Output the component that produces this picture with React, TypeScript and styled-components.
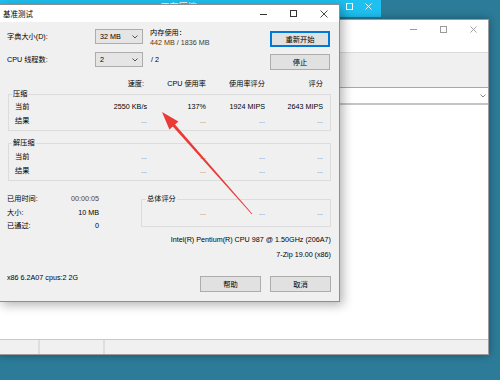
import React from "react";
import styled, { createGlobalStyle } from "styled-components";

const Global = createGlobalStyle`
  html, body { margin: 0; padding: 0; }
  body {
    width: 500px; height: 380px; overflow: hidden;
    font-family: "Liberation Sans", "Noto Sans CJK SC", sans-serif;
  }
  * { box-sizing: border-box; }
`;

const Desktop = styled.div`
  position: relative;
  width: 500px;
  height: 380px;
  overflow: hidden;
  background: #2c7b98;
`;

/* ---------- cyan background window strip ---------- */
const BackStrip = styled.div`
  position: absolute;
  left: 0;
  top: 0;
  width: 381px;
  height: 17px;
  background: #1ec0f0;
  display: flex;
  align-items: center;
  padding: 0 9px 4px 140px;
`;
const StripTitle = styled.span`
  color: #fff;
  font-size: 9px;
  white-space: nowrap;
`;
const StripControls = styled.div`
  margin-left: auto;
  display: flex;
  gap: 12px;
  align-items: center;
`;

/* ---------- explorer window behind ---------- */
const Explorer = styled.div`
  position: absolute;
  left: -2px;
  top: 19px;
  width: 491px;
  height: 336px;
  background: #fff;
  border: 1px solid #9c9c9c;
  box-shadow: 0 0 8px rgba(0, 0, 0, 0.35);
  display: flex;
  flex-direction: column;
`;
const ExTitle = styled.div`
  height: 32px;
  display: flex;
  justify-content: flex-end;
  align-items: flex-start;
  padding: 5px 11px 0 0;
`;
const ExToolbar = styled.div`
  height: 35px;
  background: #f0f0f0;
  border-top: 1px solid #dadada;
`;
const ExAddress = styled.div`
  height: 18px;
  background: #fff;
  border-top: 1px solid #a8a8a8;
  border-bottom: 2px solid #c4c4c4;
  display: flex;
  justify-content: flex-end;
  align-items: center;
  padding-right: 2px;
`;
const ExContent = styled.div`
  flex: 1;
  background: #fff;
`;
const ExStatus = styled.div`
  height: 15px;
  background: #f0f0f0;
  border-top: 1px solid #c8c8c8;
  display: flex;
`;
const StatusCell = styled.div<{ $w: number }>`
  width: ${(p) => p.$w}px;
  border-right: 2px solid #dedede;
`;

const CtrlGroup = styled.div<{ $gap: number }>`
  display: flex;
  align-items: center;
  gap: ${(p) => p.$gap}px;
`;

/* ---------- benchmark dialog ---------- */
const Dialog = styled.div`
  position: absolute;
  left: -1px;
  top: 4px;
  width: 341px;
  height: 298px;
  background: #f0f0f0;
  border: 1px solid #8e8e8e;
  box-shadow: 3px 3px 10px rgba(0, 0, 0, 0.3);
  display: flex;
  flex-direction: column;
`;
const TitleBar = styled.div`
  height: 17px;
  background: #fff;
  display: flex;
  align-items: center;
  padding: 0 11px 0 3px;
`;
const TitleText = styled.span`
  font-size: 7.5px;
  color: #000;
`;
const TitleControls = styled.div`
  margin-left: auto;
  display: flex;
  align-items: center;
  gap: 23px;
`;

const Body = styled.div`
  flex: 1;
  padding: 6px 8px 0 7px;
  display: flex;
  flex-direction: column;
  font-size: 7.2px;
  color: #000;
`;

const TopGrid = styled.div`
  display: grid;
  grid-template-columns: 88px 48px 127px 60px;
  grid-template-rows: 23px 23px;
`;
const FieldLabel = styled.div`
  line-height: 15px;
  margin-top: 1px;
  white-space: nowrap;
`;
const Combo = styled.div`
  height: 15px;
  margin-top: 1px;
  background: #e5e5e5;
  border: 1px solid #adadad;
  display: flex;
  align-items: center;
  justify-content: space-between;
  padding: 0 4px 0 4px;
  white-space: nowrap;
`;
const MemInfo = styled.div`
  padding-left: 7px;
  line-height: 10px;
  white-space: nowrap;
`;
const MemValue = styled.div`
  color: #4a3b28;
`;
const ThreadsInfo = styled.div`
  padding-left: 8px;
  line-height: 15px;
  margin-top: 1px;
`;
const Btn = styled.button<{ $primary?: boolean; $top?: number }>`
  width: ${(p) => (p.$primary !== undefined ? 60 : 61)}px;
  height: 16px;
  margin: ${(p) => p.$top ?? 3}px 0 0 0;
  padding: 0;
  background: #e1e1e1;
  border: 1px solid ${(p) => (p.$primary ? "#0078d7" : "#adadad")};
  box-shadow: ${(p) => (p.$primary ? "inset 0 0 0 1px #0078d7" : "none")};
  font-family: inherit;
  font-size: 7.3px;
  color: #000;
  display: flex;
  align-items: center;
  justify-content: center;
`;

const StatGrid = styled.div<{ $pt?: number; $pb?: number }>`
  display: grid;
  grid-template-columns: 72px 60px 59px 59px 58px;
  padding: ${(p) => p.$pt ?? 0}px 7px ${(p) => p.$pb ?? 0}px 6px;
  line-height: 14px;
`;
const HeaderGrid = styled(StatGrid)`
  margin: 5px 0 0 1px;
  padding: 0 8px 0 7px;
  line-height: 10px;
`;
const Cell = styled.div<{ $pr?: number; $tone?: "dots" | "violet" }>`
  text-align: right;
  white-space: nowrap;
  padding-right: ${(p) => p.$pr ?? 0}px;
  color: ${(p) =>
    p.$tone === "dots" ? "#6f6f6f" : p.$tone === "violet" ? "#7a5f9c" : "inherit"};
`;
const RowLabel = styled.div`
  white-space: nowrap;
`;

const Group = styled.fieldset<{ $mt?: number; $w?: number }>`
  margin: ${(p) => p.$mt ?? 0}px 0 0 1px;
  padding: 0;
  border: 1px solid #dcdcdc;
  min-width: 0;
  width: ${(p) => p.$w ?? 323}px;
`;
const GroupLegend = styled.legend<{ $ml?: number }>`
  margin-left: ${(p) => p.$ml ?? 3}px;
  padding: 0 1px;
  line-height: 10px;
  font-size: 7.2px;
`;

const BottomSection = styled.div`
  display: flex;
  align-items: flex-start;
  margin-top: 11px;
`;
const InfoList = styled.div`
  width: 92px;
  display: grid;
  grid-template-columns: 1fr auto;
  line-height: 13.5px;
`;
const InfoValue = styled.div<{ $warm?: boolean }>`
  text-align: right;
  color: ${(p) => (p.$warm ? "#5a3f1e" : "inherit")};
`;
const TotalGroup = styled(Group)`
  margin: 2px 0 0 42px;
`;
const TotalGrid = styled.div`
  display: grid;
  grid-template-columns: 64px 59px 58px;
  padding: 2px 7px 6px 0;
  line-height: 14px;
`;

const RightLine = styled.div<{ $mt?: number }>`
  text-align: right;
  line-height: 15px;
  margin-top: ${(p) => p.$mt ?? 0}px;
  white-space: nowrap;
`;

const Footer = styled.div`
  display: flex;
  align-items: flex-start;
`;
const FooterText = styled.div`
  margin-top: 10px;
  line-height: 12px;
  white-space: nowrap;
`;
const FooterButtons = styled.div`
  margin-left: auto;
  display: flex;
  gap: 9px;
`;

const ArrowLayer = styled.svg`
  position: absolute;
  left: 0;
  top: 0;
  pointer-events: none;
`;

/* ---------- icons ---------- */
const MinIcon = ({ c, w = 7 }: { c: string; w?: number }) => (
  <svg width={w} height={8} viewBox={`0 0 ${w} 8`}>
    <line x1={0} y1={4.5} x2={w} y2={4.5} stroke={c} strokeWidth={1} />
  </svg>
);
const MaxIcon = ({ c, s = 6 }: { c: string; s?: number }) => (
  <svg width={s + 1} height={s + 1} viewBox={`0 0 ${s + 1} ${s + 1}`}>
    <rect x={0.5} y={0.5} width={s} height={s} fill="none" stroke={c} strokeWidth={1} />
  </svg>
);
const CloseIcon = ({ c, s = 8 }: { c: string; s?: number }) => (
  <svg width={s} height={s} viewBox={`0 0 ${s} ${s}`}>
    <path d={`M0.5 0.5 L${s - 0.5} ${s - 0.5} M${s - 0.5} 0.5 L0.5 ${s - 0.5}`} stroke={c} strokeWidth={0.9} />
  </svg>
);
const Chevron = ({ c = "#444" }: { c?: string }) => (
  <svg width={6} height={4} viewBox="0 0 6 4">
    <polyline points="0.5,0.5 3,3 5.5,0.5" fill="none" stroke={c} strokeWidth={0.9} />
  </svg>
);

type Row = { label: string; v: [string, string, string, string] };

const StatRows = ({ rows }: { rows: Row[] }) => (
  <>
    {rows.map((r) => (
      <React.Fragment key={r.label}>
        <RowLabel>{r.label}</RowLabel>
        {r.v.map((val, i) => (
          <Cell
            key={i}
            $tone={val === "..." ? (i === 2 ? "violet" : "dots") : undefined}
          >
            {val}
          </Cell>
        ))}
      </React.Fragment>
    ))}
  </>
);

export default function App() {
  // arrow geometry
  const tip = [162, 112];
  const tail = [252, 214];
  const dx = tip[0] - tail[0];
  const dy = tip[1] - tail[1];
  const len = Math.hypot(dx, dy);
  const ux = dx / len;
  const uy = dy / len;
  const px = -uy;
  const py = ux;
  const hl = 18;
  const hw = 6;
  const bx = tip[0] - hl * ux;
  const by = tip[1] - hl * uy;
  const head = `${tip[0]},${tip[1]} ${bx + hw * px},${by + hw * py} ${bx - hw * px},${by - hw * py}`;
  const sb = 1.5;
  const st = 0.4;
  const shaft = `${bx + 2 * ux + sb * px},${by + 2 * uy + sb * py} ${tail[0] + st * px},${tail[1] + st * py} ${tail[0] - st * px},${tail[1] - st * py} ${bx + 2 * ux - sb * px},${by + 2 * uy - sb * py}`;

  return (
    <>
      <Global />
      <Desktop>
        <BackStrip>
          <StripTitle>27% 正在压缩</StripTitle>
          <StripControls>
            <MaxIcon c="#ffffff" s={6} />
            <CloseIcon c="#ffffff" s={7} />
          </StripControls>
        </BackStrip>

        <Explorer>
          <ExTitle>
            <CtrlGroup $gap={23}>
              <MinIcon c="#9a9a9a" w={7} />
              <MaxIcon c="#9a9a9a" s={6} />
              <CloseIcon c="#9a9a9a" s={7} />
            </CtrlGroup>
          </ExTitle>
          <ExToolbar />
          <ExAddress>
            <Chevron c="#777" />
          </ExAddress>
          <ExContent />
          <ExStatus>
            <StatusCell $w={41} />
            <StatusCell $w={65} />
          </ExStatus>
        </Explorer>

        <Dialog>
          <TitleBar>
            <TitleText>基准测试</TitleText>
            <TitleControls>
              <MinIcon c="#333" w={7} />
              <MaxIcon c="#333" s={6} />
              <CloseIcon c="#333" s={8} />
            </TitleControls>
          </TitleBar>
          <Body>
            <TopGrid>
              <FieldLabel>字典大小(D):</FieldLabel>
              <Combo>
                <span>32 MB</span>
                <Chevron />
              </Combo>
              <MemInfo>
                <div>内存使用：</div>
                <MemValue>442 MB / 1836 MB</MemValue>
              </MemInfo>
              <Btn $primary>重新开始</Btn>

              <FieldLabel>CPU 线程数:</FieldLabel>
              <Combo>
                <span>2</span>
                <Chevron />
              </Combo>
              <ThreadsInfo>/ 2</ThreadsInfo>
              <Btn $primary={false}>停止</Btn>
            </TopGrid>

            <HeaderGrid>
              <div />
              <Cell $pr={3}>速度:</Cell>
              <Cell>CPU 使用率</Cell>
              <Cell>使用率评分</Cell>
              <Cell>评分</Cell>
            </HeaderGrid>

            <Group>
              <GroupLegend>压缩</GroupLegend>
              <StatGrid $pt={1} $pb={2}>
                <StatRows
                  rows={[
                    { label: "当前", v: ["2550 KB/s", "137%", "1924 MIPS", "2643 MIPS"] },
                    { label: "结果", v: ["...", "...", "...", "..."] },
                  ]}
                />
              </StatGrid>
            </Group>

            <Group $mt={7}>
              <GroupLegend>解压缩</GroupLegend>
              <StatGrid $pt={2} $pb={2}>
                <StatRows
                  rows={[
                    { label: "当前", v: ["...", "...", "...", "..."] },
                    { label: "结果", v: ["...", "...", "...", "..."] },
                  ]}
                />
              </StatGrid>
            </Group>

            <BottomSection>
              <InfoList>
                <div>已用时间:</div>
                <InfoValue $warm>00:00:05</InfoValue>
                <div>大小:</div>
                <InfoValue>10 MB</InfoValue>
                <div>已通过:</div>
                <InfoValue>0</InfoValue>
              </InfoList>
              <TotalGroup $w={190}>
                <GroupLegend $ml={4}>总体评分</GroupLegend>
                <TotalGrid>
                  <Cell $tone="dots">...</Cell>
                  <Cell $tone="violet">...</Cell>
                  <Cell $tone="dots">...</Cell>
                </TotalGrid>
              </TotalGroup>
            </BottomSection>

            <RightLine $mt={-1}>Intel(R) Pentium(R) CPU 987 @ 1.50GHz (206A7)</RightLine>
            <RightLine>7-Zip 19.00 (x86)</RightLine>

            <Footer>
              <FooterText>x86 6.2A07 cpus:2 2G</FooterText>
              <FooterButtons>
                <Btn $top={14.5}>帮助</Btn>
                <Btn $top={14.5}>取消</Btn>
              </FooterButtons>
            </Footer>
          </Body>
        </Dialog>

        <ArrowLayer width={500} height={380} viewBox="0 0 500 380">
          <polygon points={shaft} fill="#ea3b36" />
          <polygon points={head} fill="#ea3b36" />
        </ArrowLayer>
      </Desktop>
    </>
  );
}
